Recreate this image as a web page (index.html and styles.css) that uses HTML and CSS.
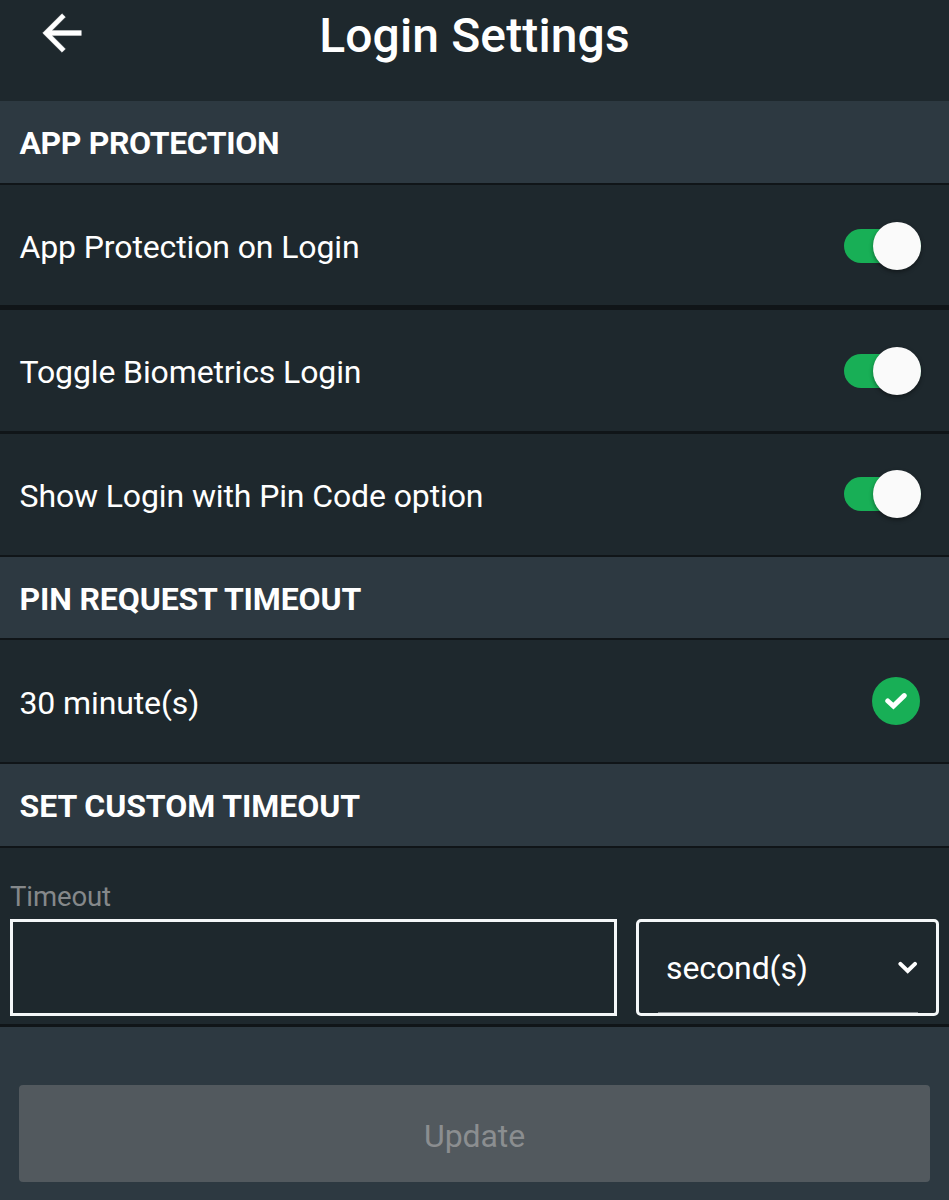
FILE: index.html
```html
<!DOCTYPE html>
<html lang="en">
<head>
<meta charset="utf-8">
<title>Login Settings</title>
<link rel="stylesheet" href="styles.css">
</head>
<body>
<main class="screen">
  <header class="topbar">
    <button class="back" aria-label="Back"><svg width="58" height="58" viewBox="0 0 24 24" fill="#fff" stroke="#fff" stroke-width=".15"><path d="M20 11H7.83l5.59-5.59L12 4l-8 8 8 8 1.41-1.41L7.83 13H20v-2z"/></svg></button>
    <h1 class="title">Login Settings</h1>
  </header>
  <h2 class="section section-protection"><span>APP PROTECTION</span></h2>
  <div class="row row-app"><span class="label">App Protection on Login</span><span class="switch"><span class="thumb"></span></span></div>
  <div class="row row-bio"><span class="label">Toggle Biometrics Login</span><span class="switch"><span class="thumb"></span></span></div>
  <div class="row row-pin"><span class="label">Show Login with Pin Code option</span><span class="switch"><span class="thumb"></span></span></div>
  <h2 class="section section-pin"><span>PIN REQUEST TIMEOUT</span></h2>
  <div class="row row-minutes"><span class="label">30 minute(s)</span><span class="badge"><svg width="22" height="18" viewBox="0 0 22 18" fill="none" stroke="#fff" stroke-width="5"><path d="M2.8 9L8.4 14 19.2 3.6" stroke-linecap="round"/></svg></span></div>
  <h2 class="section section-custom"><span>SET CUSTOM TIMEOUT</span></h2>
  <div class="custom">
    <label class="field-label" for="timeout">Timeout</label>
    <div class="fields">
      <input class="input" id="timeout" type="text">
      <div class="select"><span>second(s)</span><svg class="chevron" width="20" height="20" viewBox="0 0 20 20" fill="none" stroke="#fff" stroke-width="4"><path d="M2.4 5.8l7.3 7.2 7.3-7.2" stroke-linecap="round"/></svg></div>
    </div>
  </div>
  <footer class="footer"><button class="update" disabled>Update</button></footer>
</main>
</body>
</html>
```
FILE: styles.css
```css
* { box-sizing: border-box; }
body { margin: 0; background: #2d3941; font-family: Roboto, sans-serif; color: #fff; }
button { border: 0; padding: 0; background: none; font: inherit; }
.screen { width: 949px; height: 1200px; overflow: hidden; display: flex; flex-direction: column; font-size: 32px; line-height: 38px; }
.topbar { height: 101px; flex: none; background: #1e282d; display: grid; grid-template-columns: 140px 1fr 140px; align-items: start; }
.back { height: 58px; padding: 4px 0 0 33px; text-align: left; }
.back svg { display: block; }
.title { margin: 8px 0 0; font-size: 48px; line-height: 56px; font-weight: 500; letter-spacing: .12px; text-align: center; white-space: nowrap; }
.section { margin: 0; flex: none; padding: 3px 20px 0 19.5px; background: #2d3941; border-bottom: 2px solid #101518; font-size: 32px; font-weight: 700; letter-spacing: -.13px; display: flex; align-items: center; }
.section-protection { height: 84px; padding-top: 1px; letter-spacing: -.38px; }
.section-pin { height: 83px; }
.section-custom { height: 84px; padding-top: 2px; letter-spacing: -.05px; }
.row { flex: none; padding: 0 28px 0 19.5px; background: #1e282d; border-bottom: 3px solid #101518; display: flex; align-items: center; justify-content: space-between; }
.row-app { height: 125px; border-bottom-width: 5px; }
.row-bio { height: 124px; }
.row-pin { height: 123px; border-bottom-width: 2px; }
.row-minutes { height: 124px; border-bottom-width: 2px; padding-right: 29px; }
.label { padding-top: 3px; letter-spacing: -.12px; }
.switch { width: 77px; height: 34px; display: flex; align-items: center; justify-content: flex-end; border-radius: 17px; background: #18af56; }
.thumb { width: 48px; height: 48px; flex: none; border-radius: 50%; background: #fafafa; box-shadow: 0 2px 4px rgba(0, 0, 0, .4); }
.row-app .switch { margin-top: 1px; }
.row-pin .switch { margin-bottom: 1px; }
.badge { width: 48px; height: 48px; border-radius: 50%; background: #18af56; display: flex; align-items: center; justify-content: center; }
.custom { height: 179px; flex: none; padding: 32px 10px 0; background: #1e282d; border-bottom: 3px solid #101518; }
.field-label { display: block; height: 39px; font-size: 27.5px; line-height: 34px; letter-spacing: -.1px; color: #85888a; }
.fields { display: flex; gap: 19px; }
.input { width: 607px; flex: none; height: 97px; border: 3px solid #f4f7f8; border-radius: 0; background: transparent; color: #fff; font: inherit; padding: 0 20px; outline: 0; }
.select { width: 303px; flex: none; height: 97px; border: 3px solid #f4f7f8; border-radius: 5px; display: flex; align-items: center; justify-content: space-between; padding: 0 18px 0 27px; letter-spacing: -.1px; background: linear-gradient(#80868b, #80868b) 19px 100% / 260px 1px no-repeat; }
.footer { padding: 58px 19px 0; }
.update { display: block; width: 911px; height: 97px; border-radius: 4px; background: #52595e; color: #8b8e90; padding-top: 4px; letter-spacing: -.1px; }
```
